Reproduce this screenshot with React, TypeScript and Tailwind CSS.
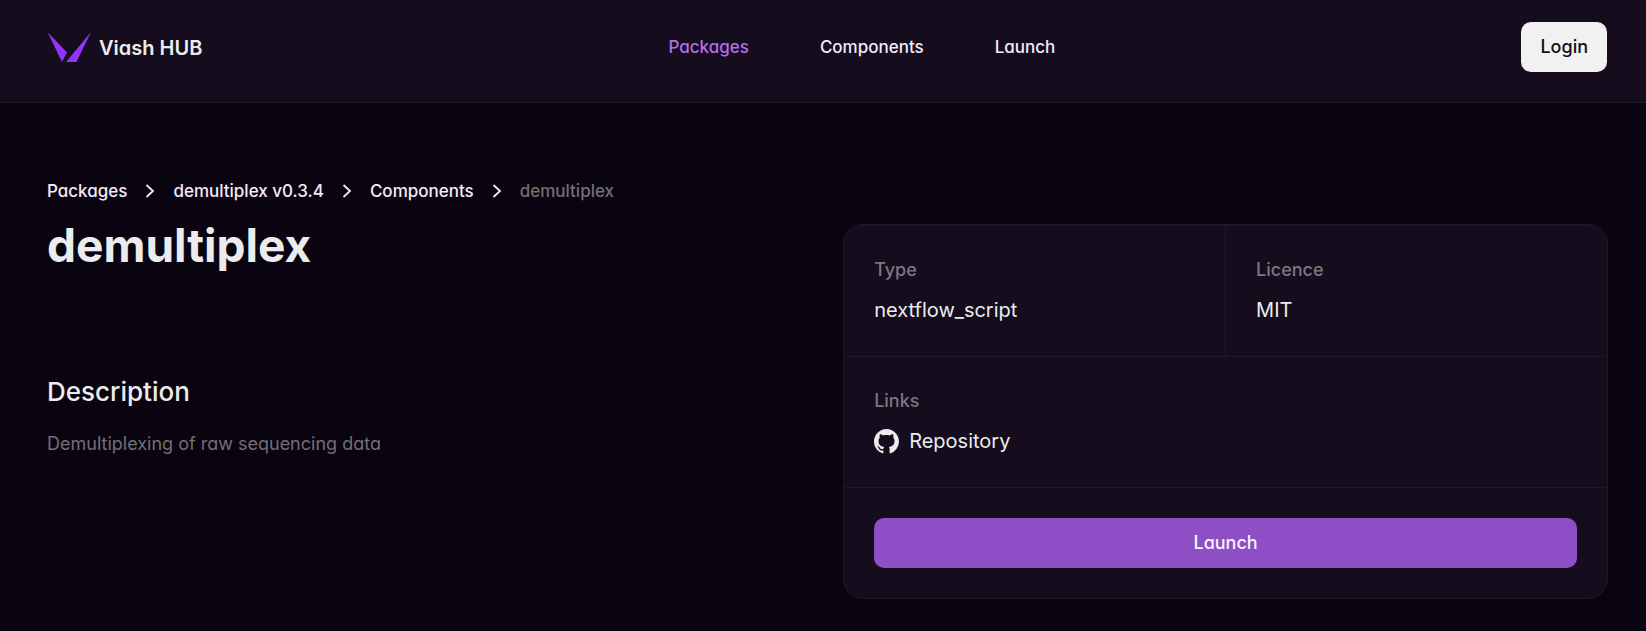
import type { ReactNode } from "react";

const navItems = [
  { label: "Packages", active: true },
  { label: "Components", active: false },
  { label: "Launch", active: false },
];

const crumbs = ["Packages", "demultiplex v0.3.4", "Components"];

function Logo() {
  return (
    <svg width="44" height="31" viewBox="0 0 44 31" fill="#9333fb" aria-hidden="true">
      <path d="M0.5 0 L20 20.5 L15 30 Z" />
      <path d="M44 0 L29.5 30 H19 Z" />
    </svg>
  );
}

function Chevron() {
  return (
    <svg
      width="10"
      height="14"
      viewBox="0 0 10 14"
      fill="none"
      stroke="#f4eafa"
      strokeWidth="1.8"
      aria-hidden="true"
    >
      <path d="M1.5 1 L8 7 L1.5 13" />
    </svg>
  );
}

function GithubMark() {
  return (
    <svg width="25" height="25" viewBox="0 0 16 16" fill="#ececec" aria-hidden="true">
      <path d="M8 0C3.58 0 0 3.58 0 8c0 3.54 2.29 6.53 5.47 7.59.4.07.55-.17.55-.38 0-.19-.01-.82-.01-1.49-2.01.37-2.53-.49-2.69-.94-.09-.23-.48-.94-.82-1.13-.28-.15-.68-.52-.01-.53.63-.01 1.08.58 1.23.82.72 1.21 1.87.87 2.33.66.07-.52.28-.87.51-1.07-1.78-.2-3.64-.89-3.64-3.95 0-.87.31-1.59.82-2.15-.08-.2-.36-1.02.08-2.12 0 0 .67-.21 2.2.82.64-.18 1.32-.27 2-.27s1.36.09 2 .27c1.53-1.04 2.2-.82 2.2-.82.44 1.1.16 1.92.08 2.12.51.56.82 1.27.82 2.15 0 3.07-1.87 3.75-3.65 3.95.29.25.54.73.54 1.48 0 1.07-.01 1.93-.01 2.2 0 .21.15.46.55.38A8.01 8.01 0 0 0 16 8c0-4.42-3.58-8-8-8Z" />
    </svg>
  );
}

function Field({ label, children }: { label: string; children: ReactNode }) {
  return (
    <div className="flex h-[130px] flex-1 flex-col gap-3 px-[30px] pt-[30px]">
      <dt className="text-lg leading-7 font-medium text-[#7b787d]">{label}</dt>
      <dd className="text-xl leading-7 text-[#ececec]">{children}</dd>
    </div>
  );
}

export default function App() {
  return (
    <div className="min-h-screen bg-[#0a0411] font-[Inter,sans-serif] text-[#ececec] [font-feature-settings:'cv11']">
      <header className="border-b border-[#1f1827] bg-[#150c1d]">
        <div className="flex h-[102px] items-start justify-between pr-[39px] pl-[47px]">
          <a href="#" className="flex items-center gap-2 pt-8">
            <Logo />
            <span className="text-xl leading-7 font-semibold">Viash HUB</span>
          </a>
          <nav className="flex gap-[71px] pt-[35px]">
            {navItems.map((item) => (
              <a
                key={item.label}
                href="#"
                className={
                  item.active
                    ? "text-[17px] leading-6 font-medium text-[#b56eea]"
                    : "text-[17px] leading-6 font-medium text-[#f4eafa]"
                }
              >
                {item.label}
              </a>
            ))}
          </nav>
          <button
            type="button"
            className="mt-[22px] h-[50px] rounded-[10px] bg-[#f1f1f1] px-[19px] text-lg font-medium text-[#150c1d]"
          >
            Login
          </button>
        </div>
      </header>

      <main className="pt-[76px] pr-[38px] pl-[47px]">
        <nav aria-label="Breadcrumb">
          <ol className="flex items-center gap-[18px] text-[17px] leading-6 font-medium">
            {crumbs.map((crumb) => (
              <li key={crumb} className="flex items-center gap-[18px]">
                <a href="#" className="text-[#f4eafa]">
                  {crumb}
                </a>
                <Chevron />
              </li>
            ))}
            <li className="text-[#717073]" aria-current="page">
              demultiplex
            </li>
          </ol>
        </nav>

        <div className="mt-[21px] grid grid-cols-[1fr_49%] gap-[30px]">
          <div>
            <h1 className="text-[46px] leading-[42px] font-bold">demultiplex</h1>
            <h2 className="mt-[110px] text-[26px] leading-8 font-medium">Description</h2>
            <p className="mt-6 text-lg leading-6 text-[#717073]">
              Demultiplexing of raw sequencing data
            </p>
          </div>

          <section className="overflow-hidden rounded-[20px] border border-[#1f1827] bg-[#150c1d]">
            <dl className="border-t border-[#1f1827]">
              <div className="flex divide-x divide-[#1f1827]">
                <Field label="Type">nextflow_script</Field>
                <Field label="Licence">MIT</Field>
              </div>
              <div className="flex border-y border-[#1f1827]">
                <Field label="Links">
                  <a href="#" className="flex items-center gap-[10px]">
                    <GithubMark />
                    Repository
                  </a>
                </Field>
              </div>
            </dl>
            <div className="p-[30px]">
              <button
                type="button"
                className="h-[50px] w-full rounded-[10px] bg-[#8e4ec6] text-lg font-medium text-[#f9f3fd]"
              >
                Launch
              </button>
            </div>
          </section>
        </div>
      </main>
    </div>
  );
}
